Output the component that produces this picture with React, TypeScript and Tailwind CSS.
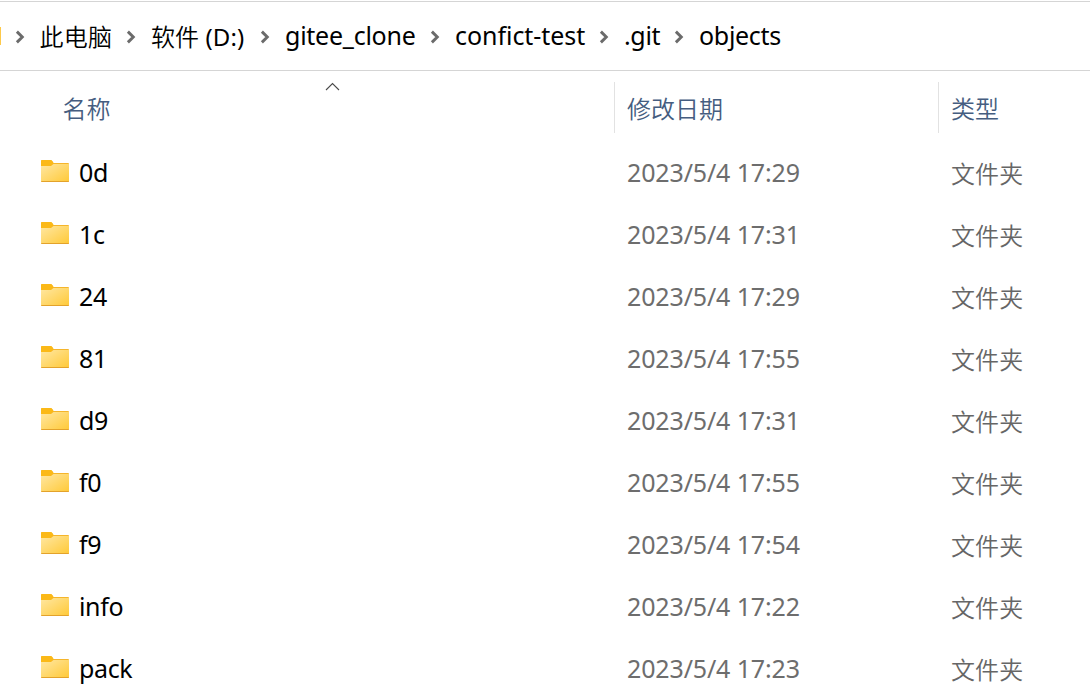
import React from 'react';

const crumbs = [
  { cjk: '此电脑', latin: '', width: 'w-[111px]', text: '-ml-[0.5px] tracking-[0.2px]' },
  { cjk: '软件', latin: ' (D:)', width: 'w-[134px]', text: 'tracking-[0.1px]' },
  { cjk: '', latin: 'gitee_clone', width: 'w-[170px]', text: 'pb-[3px] text-[25px] tracking-[-0.25px]' },
  { cjk: '', latin: 'confict-test', width: 'w-[169px]', text: 'pb-[3px] text-[25px] tracking-[-0.05px]' },
  { cjk: '', latin: '.git', width: 'w-[75px]', text: 'pb-[3px] text-[25px] tracking-[-0.35px]' },
  { cjk: '', latin: 'objects', width: 'w-[120px]', text: 'pb-[3px] text-[25px] tracking-[-0.3px]' },
];

const rows = [
  { name: '0d', date: '2023/5/4 17:29' },
  { name: '1c', date: '2023/5/4 17:31' },
  { name: '24', date: '2023/5/4 17:29' },
  { name: '81', date: '2023/5/4 17:55' },
  { name: 'd9', date: '2023/5/4 17:31' },
  { name: 'f0', date: '2023/5/4 17:55' },
  { name: 'f9', date: '2023/5/4 17:54' },
  { name: 'info', date: '2023/5/4 17:22' },
  { name: 'pack', date: '2023/5/4 17:23' },
];

function Chevron() {
  return (
    <svg width="10" height="14" viewBox="0 0 10 14" className="mt-0.5 shrink-0" fill="none" stroke="#6b6b6b" strokeWidth="2.9">
      <path d="M1.9 1.6 L7.3 7 L1.9 12.4" />
    </svg>
  );
}

function Folder() {
  return (
    <svg width="28" height="22" viewBox="0 0 28 22" className="mr-2.5 mb-1 shrink-0">
      <defs>
        <linearGradient id="folder" x1="0" y1="0" x2="1" y2="1">
          <stop offset="0" stopColor="#ffe7a2" />
          <stop offset="1" stopColor="#ffc937" />
        </linearGradient>
      </defs>
      <path d="M0 1.2Q0 0 1.2 0H9.4Q10.5 0 11.2 1L12.5 3H27Q28 3 28 4V8H0Z" fill="#f5b52b" />
      <path d="M0 1.2Q0 0 1.2 0H9.4Q10.5 0 11.2 1L12.5 3L10 6H0Z" fill="#fbb917" />
      <path d="M0 6H10L12.5 4H28V21Q28 22 27 22H1Q0 22 0 21Z" fill="url(#folder)" />
      <path d="M0 21Q0 22 1 22H27Q28 22 28 21Z" fill="#e3a22b" />
    </svg>
  );
}

export default function App() {
  return (
    <main className="h-[689px] w-[1090px] overflow-hidden bg-white font-['Noto_Sans','Noto_Sans_CJK_SC',sans-serif] text-[24px] leading-8 text-black">
      <nav className="mt-px flex h-[70px] items-center border-y border-[#d5d5d5]">
        <span className="h-[18px] w-px shrink-0 bg-[#fdc94a]" />
        <div className="ml-[14px] flex items-center">
          {crumbs.map((crumb) => (
            <div key={crumb.cjk + crumb.latin} className={`flex h-8 shrink-0 items-center whitespace-pre ${crumb.width}`}>
              <Chevron />
              <div className="pl-[15px]">
                <div className={crumb.text}>
                  {crumb.cjk && (
                    <span className="font-['Noto_Sans_CJK_SC_DemiLight','Noto_Sans_CJK_SC',sans-serif] font-[350]">{crumb.cjk}</span>
                  )}
                  {crumb.latin}
                </div>
              </div>
            </div>
          ))}
        </div>
      </nav>
      <header className="flex h-[71px] pt-[11px] font-['Noto_Sans_CJK_SC_DemiLight','Noto_Sans_CJK_SC',sans-serif] font-[350] text-[#455d80]">
        <div className="relative w-[614px] pt-[10px] pl-[62.5px]">
          名称
          <svg width="15" height="9" viewBox="0 0 15 9" className="absolute top-0 left-[325px]" fill="none" stroke="#4a4a4a" strokeWidth="1.1">
            <path d="M1 8 L7.5 1.5 L14 8" />
          </svg>
        </div>
        <div className="h-[51px] w-[324px] border-l border-[#e2e2e2] pt-[10px] pl-3">修改日期</div>
        <div className="h-[51px] border-l border-[#e2e2e2] pt-[10px] pl-3">类型</div>
      </header>
      <section>
        {rows.map((row) => (
          <div key={row.name} className="flex h-[62px] items-center">
            <div className="flex w-[627px] items-center pl-[41px]">
              <Folder />
              <span className="pb-0.5 text-[25px] tracking-[-0.35px]">{row.name}</span>
            </div>
            <span className="w-[324px] pb-0.5 text-[25px] tracking-[-0.14px] text-[#6d6d6d]">{row.date}</span>
            <span className="font-['Noto_Sans_CJK_SC_DemiLight','Noto_Sans_CJK_SC',sans-serif] font-[350] tracking-[0.1px] text-[#666666]">文件夹</span>
          </div>
        ))}
      </section>
    </main>
  );
}
